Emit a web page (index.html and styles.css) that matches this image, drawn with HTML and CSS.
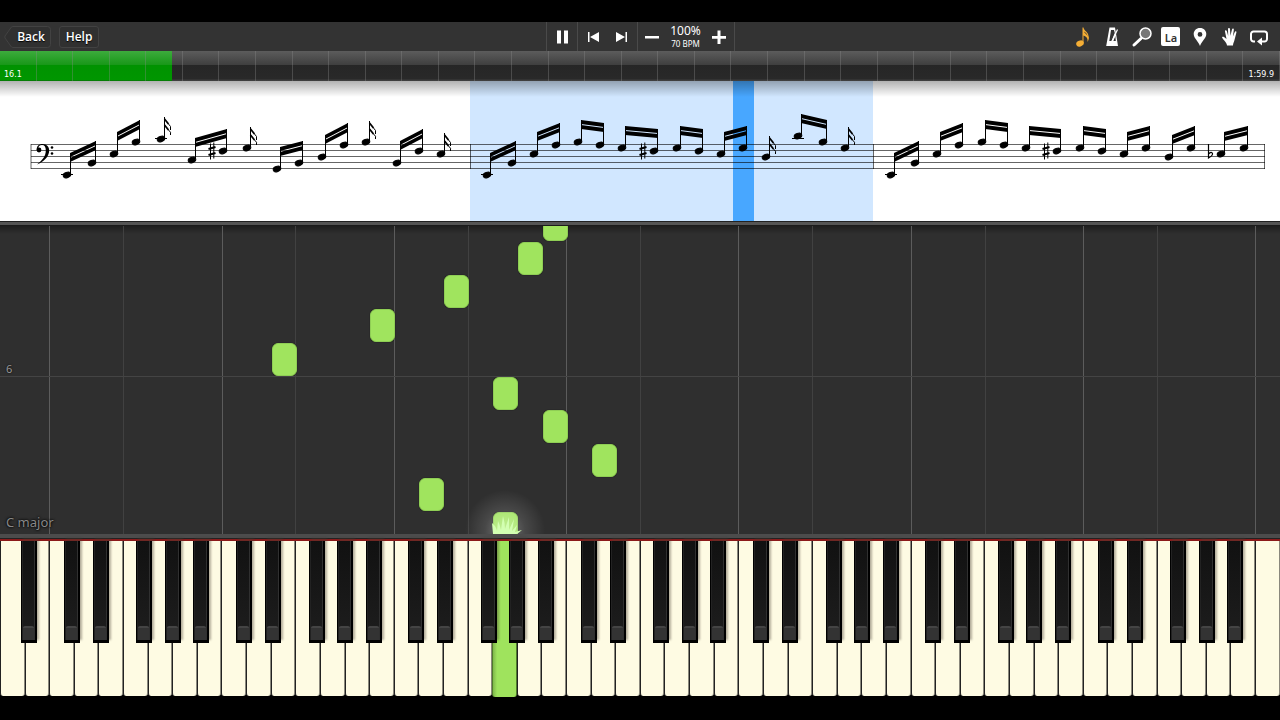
FILE: index.html
```html
<!DOCTYPE html>
<html lang="en">
<head>
  <meta charset="UTF-8">
  <title>Piano Practice</title>
  <meta name="viewport" content="width=device-width, initial-scale=1.0">
  <link rel="stylesheet" href="styles.css">
</head>
<body>
  <header class="toolbar">
    <nav class="toolbar-left">
      <button class="text-button back" type="button">
        <svg class="back-shape" viewBox="0 0 47 22" aria-hidden="true"><path d="M9 .5H43.500Q46.500 .5 46.500 3.500V18.500Q46.500 21.500 43.500 21.500H9Q7 21.500 6 19L1 12Q.5 11 1 10L6 3Q7 .5 9 .5Z"/></svg>
        <span>Back</span>
      </button>
      <button class="text-button help" type="button">Help</button>
    </nav>

    <div class="transport">
      <div class="group">
        <button class="icon-button" type="button" aria-label="Pause">
          <svg width="20" height="20" viewBox="0 0 20 20"><path d="M5 3.500h4v13H5zM12 3.500h4v13h-4z"/></svg>
        </button>
      </div>
      <div class="group">
        <button class="icon-button" type="button" aria-label="Previous">
          <svg width="20" height="20" viewBox="0 0 20 20"><path d="M5 5h1.500v10H5zM16 5v10L7 10z"/></svg>
        </button>
        <button class="icon-button" type="button" aria-label="Next">
          <svg width="20" height="20" viewBox="0 0 20 20"><path d="M13.500 5H15v10h-1.500zM4 5v10l9-5z"/></svg>
        </button>
      </div>
      <div class="group tempo-group">
        <button class="icon-button" type="button" aria-label="Slower">
          <svg width="20" height="20" viewBox="0 0 20 20"><path d="M3 9h14v2.500H3z"/></svg>
        </button>
        <div class="tempo">
          <span class="percent">100%</span>
          <span class="bpm">70 BPM</span>
        </div>
        <button class="icon-button" type="button" aria-label="Faster">
          <svg width="20" height="20" viewBox="0 0 20 20"><path d="M8.500 3.500h3V9H17v2.700h-5.500V17h-3v-5.300H3V9h5.500z"/></svg>
        </button>
      </div>
    </div>

    <div class="tools">
      <button class="icon-button active" type="button" aria-label="Notes">
        <svg width="22" height="22" viewBox="0 0 22 22"><ellipse cx="8" cy="17.500" rx="3.900" ry="2.900" transform="rotate(-22 8 17.500)"/><path d="M10.500 1.500h1c.5 3.500 5 4.500 5 8.500 1 2 0 4-1 6 .5-4-1-5.500-4-6.500V17h-1zM11.800 5.500c1 2 3 2.500 3.700 4.500-.2-2.200-2-3.600-3.700-4.500z" fill-rule="evenodd"/></svg>
      </button>
      <button class="icon-button" type="button" aria-label="Metronome">
        <svg width="22" height="22" viewBox="0 0 22 22"><path fill-rule="evenodd" d="M8.500 1.500h5.500l3 18.500H5.200zM10 4 8.300 15h2.200l3.300-8-.8-3zM14.300 10l-2 5h2.500z"/><path d="M11 15.500 16.500 3.500" fill="none" stroke="#fff" stroke-width="1.200"/></svg>
      </button>
      <button class="icon-button" type="button" aria-label="Zoom">
        <svg width="22" height="22" viewBox="0 0 22 22"><path d="M3 19 10 12.500" stroke="#fff" stroke-width="3" stroke-linecap="round"/><circle cx="14.500" cy="7.500" r="5.500" fill="#777" stroke="#fff" stroke-width="1.500"/></svg>
      </button>
      <button class="icon-button" type="button" aria-label="Note names"><span class="la">La</span></button>
      <button class="icon-button" type="button" aria-label="Marker">
        <svg width="22" height="22" viewBox="0 0 22 22"><path fill-rule="evenodd" d="M11 2c3.800 0 6.300 2.600 6.300 6.100 0 4.200-4.300 6.700-6.300 11.900-2-5.200-6.300-7.700-6.300-11.900C4.700 4.600 7.200 2 11 2zm0 4a2.400 2.400 0 1 0 0 4.800A2.400 2.400 0 0 0 11 6z"/></svg>
      </button>
      <button class="icon-button" type="button" aria-label="Hands">
        <svg width="22" height="22" viewBox="0 0 22 22"><path d="M8 19.500c0-2.500-3.500-5.500-4.700-7.500-.7-1.300.8-1.700 1.700-.9L7.500 13 6 5.500c-.3-1.500 1.400-1.800 1.800-.4L9.200 10 9 3c0-1.500 1.900-1.500 2 0l.4 6.700L13 3.500c.3-1.400 2-1.100 1.800.4l-.9 6.600 1.900-4.500c.5-1.200 1.900-.7 1.600.6L15.500 14c-.5 2.200-1.500 3.500-1.500 5.500z"/></svg>
      </button>
      <button class="icon-button" type="button" aria-label="Loop">
        <svg width="22" height="22" viewBox="0 0 22 22"><path d="M7 15.500H5.500A2.500 2.500 0 0 1 3 13V8a2.500 2.500 0 0 1 2.500-2.500h11A2.500 2.500 0 0 1 19 8v5a2.500 2.500 0 0 1-2.500 2.500H13" fill="none" stroke="#fff" stroke-width="2"/><path d="M14 11.500v8l-5-4z"/></svg>
      </button>
    </div>
  </header>

  <div class="timeline">
    <div class="played"></div>
    <div class="ticks" id="ticks"></div>
    <span class="position">16.1</span>
    <span class="duration">1:59.9</span>
  </div>

  <section class="score" aria-label="Score">
    <svg id="score" viewBox="0 0 1280 140">
      <defs>
        <g id="sharp"><path d="M-1.500-7.500v16M1.800-8.500v16" stroke-width="1"/><path d="M-3.500-2 3.500-4M-3.500 4 3.500 2" stroke-width="2"/></g>
        <g id="flat"><path d="M-1.500-10V4Q3 1.500 2.500-.5Q1.500-3-1.500 0" fill="none" stroke-width="1.200"/></g>
        <g id="flags" fill="none"><path d="M0 2 4 7M0 8 4 13" stroke-width="1.800"/><path d="M4 7Q7 9 6 13M4 13Q7 15 6 18" stroke-width="1"/></g>
      </defs>
      <rect class="measure" x="470" y="0" width="403" height="140"/>
      <rect class="cursor" x="733" y="0" width="21" height="140"/>
      <path class="staff" d="M31 63.500H1265M31 69.500H1265M31 75.500H1265M31 81.500H1265M31 87.500H1265M31 63V88M470.500 63V88M873.500 63V88M1264.500 63V88"/>
      <g class="clef">
        <circle cx="39" cy="69" r="2.400"/>
        <path d="M36.700 69C36.500 65 39 63 42.500 63C47 63 49.200 66 49.200 69.500C49.200 76 43 81 37 83.500C42.500 79 45.800 75 45.800 69.500C45.800 66 44.800 64 42 64C39.500 64 38 65.500 38.500 68Z"/>
        <circle cx="52" cy="66.500" r="1.300"/><circle cx="52" cy="72.500" r="1.300"/>
      </g>
    </svg>
  </section>

  <div class="divider"></div>

  <main class="roll" id="roll">
    <div class="barline"><span class="bar-number">6</span></div>
    <span class="key-name">C major</span>
    <div class="spark">
      <svg viewBox="0 0 40 26" width="40" height="26"><path d="M6 26 5 15Q9 18 10 23L11 13Q13 17 14 22L16 8Q18 15 18 21L22 9Q22 16 22 22L27 11Q26 18 25 23L30 17Q29 21 28 24L35 22Q32 25 29 26Z"/></svg>
    </div>
  </main>

  <div class="rail"></div>
  <div class="piano">
    <div class="white-keys" id="white-keys"></div>
    <div class="black-keys" id="black-keys"></div>
  </div>

  <script src="script.js"></script>
</body>
</html>
```
FILE: styles.css
```css
* {
  box-sizing: border-box;
}
body {
  margin: 0;
  padding: 22px 0 24px;
  min-height: 100vh;
  display: flex;
  flex-direction: column;
  background: #000;
  color: #fff;
  font-family: "Noto Sans", sans-serif;
  overflow-x: hidden;
}
button {
  font: inherit;
  color: inherit;
  background: none;
  border: 0;
  padding: 0;
  cursor: pointer;
}

/* toolbar */
.toolbar {
  display: grid;
  grid-template-columns: 1fr auto 1fr;
  height: 29px;
  background: #333;
}
.toolbar-left {
  display: flex;
  align-items: center;
  gap: 8px;
  padding-left: 4px;
}
.text-button {
  position: relative;
  height: 22px;
  font-family: "Open Sans", sans-serif;
  font-size: 12px;
  font-weight: 600;
  line-height: 20px;
  text-shadow: 0 1px 1px #000;
}
.back {
  width: 47px;
  padding-left: 7px;
}
.back span {
  position: relative;
}
.back-shape {
  position: absolute;
  inset: 0;
  fill: #303030;
  stroke: #424242;
}
.help {
  width: 40px;
  border: 1px solid #424242;
  border-radius: 3px;
  background: #303030;
}
.transport {
  display: flex;
  border-left: 1px solid #4a4a4a;
}
.group {
  display: flex;
  align-items: center;
  border-right: 1px solid #4a4a4a;
}
.icon-button {
  display: flex;
  align-items: center;
  justify-content: center;
  width: 30px;
  height: 29px;
}
.icon-button svg {
  fill: #fff;
}
.group:nth-child(2) .icon-button:last-child {
  width: 29px;
}
.tempo-group {
  width: 97px;
  justify-content: space-between;
}
.tempo {
  display: flex;
  flex-direction: column;
  align-items: center;
  white-space: nowrap;
}
.percent {
  font-size: 12px;
  line-height: 14px;
}
.bpm {
  font-size: 8px;
  line-height: 11px;
}
.tempo-group .icon-button {
  flex: none;
  width: 28px;
}
.tools {
  display: flex;
  justify-self: end;
  justify-content: space-between;
  width: 211px;
  padding-right: 7px;
}
.tools .icon-button {
  width: 28px;
}
.tools .active svg {
  fill: #f5ae35;
}
.la {
  width: 19px;
  height: 19px;
  border-radius: 2px;
  background: #fff;
  color: #333;
  font-size: 11px;
  font-weight: 600;
  line-height: 21px;
}

/* song timeline */
.timeline {
  position: relative;
  height: 30px;
  background: linear-gradient(#5c5c5c, #404040 45%, #262626 47%, #292929 92%, #444);
  font-size: 8px;
  line-height: 8px;
}
.played {
  position: absolute;
  inset: 0 auto 0 0;
  width: 13.4%;
  background: linear-gradient(#3dab3d, #199819 45%, #009200 47%, #009600 95%, #087008);
}
.ticks {
  position: absolute;
  inset: 0;
  display: grid;
  grid-template-columns: repeat(35, 1fr);
}
.ticks i {
  border-right: 1px solid rgba(140, 140, 140, 0.35);
}
.position,
.duration {
  position: absolute;
  bottom: 2px;
  font-family: "DejaVu Sans", sans-serif;
}
.position {
  left: 4px;
}
.duration {
  right: 6px;
}

/* notation */
.score {
  position: relative;
  background: #fff;
}
.score::before {
  content: "";
  position: absolute;
  inset: 0 0 auto;
  height: 16px;
  background: linear-gradient(rgba(0, 0, 0, 0.3), transparent);
}
.score svg {
  display: block;
  width: 100%;
}
.measure {
  fill: #d1e7ff;
}
.cursor {
  fill: #48a7ff;
}
.staff {
  fill: none;
  stroke: #000;
  stroke-opacity: 0.6;
}
.notes {
  stroke: #000;
}

.divider {
  height: 5px;
  background: linear-gradient(#222 1px, #555 1px 4px, #1c1c1c 4px);
}

/* falling notes */
.roll {
  position: relative;
  flex: 1;
  min-height: 308px;
  overflow: hidden;
  background: #2f2f2f;
}
.roll::before {
  content: "";
  position: absolute;
  inset: 0 0 auto;
  height: 8px;
  background: linear-gradient(rgba(0, 0, 0, 0.35), transparent);
}
.string {
  position: absolute;
  top: 0;
  bottom: 0;
  width: 1px;
  background: #414141;
}
.string.octave {
  background: #5c5c5c;
}
.barline {
  position: absolute;
  left: 0;
  right: 0;
  bottom: 157px;
  border-bottom: 1px solid #444;
}
.bar-number {
  display: block;
  padding-left: 6px;
  color: #999;
  font-size: 11px;
  line-height: 14px;
  text-shadow: 0 0 2px #000;
}
.key-name {
  position: absolute;
  left: 6px;
  bottom: 3px;
  color: #888;
  font-size: 13px;
  line-height: 18px;
  text-shadow: 0 0 3px #000, 0 0 2px #000;
}
.note {
  position: absolute;
  width: 25px;
  height: 33px;
  margin-left: 1px;
  border: 1px solid #8fce55;
  border-radius: 6px;
  background: #a0e45e;
  box-shadow: 0 0 1px #000;
}
.spark {
  position: absolute;
  left: 39.45%;
  bottom: -36px;
  width: 80px;
  height: 80px;
  margin-left: -40px;
  background: radial-gradient(closest-side, rgba(255, 255, 255, 0.35), rgba(255, 255, 255, 0.12) 50%, transparent);
}
.spark svg {
  position: absolute;
  left: 22px;
  top: 18px;
  fill: #d3ffb2;
}

/* keyboard */
.rail {
  height: 7px;
  background: linear-gradient(#4c4c4c 4px, #222 4px, #222 5px, #8b1a1a 5px);
}
.piano {
  position: relative;
  height: 155px;
}
.white-keys {
  display: flex;
  height: 100%;
}
.white-key {
  flex: 1;
  border-left: 1px solid #222;
  border-right: 1px solid #8a887c;
  border-radius: 0 0 3px 3px;
  background: #fefbe3;
}
.white-key.pressed {
  height: 156px;
  border-color: #4f7a2c;
  background: linear-gradient(90deg, #7fb84a, #9fe35d 18%);
}
.black-key {
  position: absolute;
  top: 0;
  width: 16px;
  height: 102px;
  margin-left: -8px;
  border: solid #000;
  border-width: 0 2px 3px 1px;
  background: linear-gradient(90deg, #222 1px, transparent 1px 12px, #303030 12px), linear-gradient(#111, #1c1c1c 86px, #333 88px);
  box-shadow: 2px -3px 2px rgba(70, 60, 50, 0.4);
}
.black-key::after {
  content: "";
  position: absolute;
  left: 1px;
  right: 1px;
  bottom: 0;
  height: 12px;
  border-top: 2px solid #444;
  border-radius: 2px 2px 0 0;
  background: #333;
}
```
FILE: script.js
```js
const WHITE_KEYS = 52;
const svgNS = 'http://www.w3.org/2000/svg';

// timeline
const ticks = document.getElementById('ticks');
for (let i = 0; i < 35; i++) {
  ticks.appendChild(document.createElement('i'));
}

// score: [x, step below the top line, stem top], one or two notes to a beam
const groups = [
  [[67, 10, 72], [92, 6, 60]],
  [[114, 3, 51], [136, -1, 39]],
  [[161, -2, 36]],
  [[192, 5, 57], [223, 2, 48]],
  [[247, 1, 46]],
  [[277, 8, 66], [299, 6, 60]],
  [[322, 4, 54], [344, 0, 42]],
  [[366, -1, 40]],
  [[397, 6, 60], [419, 2, 48]],
  [[441, 3, 52]],
  [[487, 10, 72], [512, 6, 60]],
  [[534, 3, 51], [556, 0, 42]],
  [[578, -1, 39], [600, 0, 42]],
  [[622, 1, 45], [654, 2, 48]],
  [[677, 1, 45], [699, 2, 48]],
  [[721, 3, 51], [743, 1, 45]],
  [[766, 4, 55]],
  [[798, -3, 33], [823, -1, 39]],
  [[845, 1, 46]],
  [[891, 10, 72], [915, 6, 60]],
  [[937, 3, 51], [959, 0, 42]],
  [[982, -1, 39], [1004, 0, 42]],
  [[1026, 1, 45], [1057, 2, 48]],
  [[1080, 1, 45], [1102, 2, 48]],
  [[1124, 3, 51], [1146, 1, 45]],
  [[1169, 4, 54], [1191, 1, 45]],
  [[1221, 3, 51], [1244, 1, 45]]
];
const accidentals = [['sharp', 212, 2], ['sharp', 643, 2], ['sharp', 1046, 2], ['flat', 1210, 3]];

const lineY = step => 64 + step * 3;
let music = '';
groups.forEach(group => {
  group.forEach(([x, step, top]) => {
    const y = lineY(step);
    music += `<ellipse cx="${x}" cy="${y}" rx="3.900" ry="2.600" transform="rotate(-20 ${x} ${y})"/>`;
    music += `<path d="M${x + 3.5} ${y - 1}V${top}"/>`;
    if (step === 10 || step <= -2) {
      const ledger = lineY(step === 10 ? 10 : -2) - 0.5;
      music += `<path d="M${x - 6} ${ledger}H${x + 6}"/>`;
    }
  });
  const [x1, , t1] = group[0];
  if (group.length === 1) {
    music += `<use href="#flags" x="${x1 + 3.5}" y="${t1}"/>`;
  } else {
    const [x2, , t2] = group[1];
    [0, 5].forEach(d => {
      music += `<path stroke="none" d="M${x1 + 3} ${t1 + d}L${x2 + 4} ${t2 + d}v4L${x1 + 3} ${t1 + d + 4}z"/>`;
    });
  }
});
accidentals.forEach(([name, x, step]) => {
  music += `<use href="#${name}" x="${x}" y="${lineY(step)}"/>`;
});
const notes = document.createElementNS(svgNS, 'g');
notes.setAttribute('class', 'notes');
notes.innerHTML = music;
document.getElementById('score').appendChild(notes);

// piano roll
const roll = document.getElementById('roll');
const addToRoll = (className, key, bottom) => {
  const el = document.createElement('div');
  el.className = className;
  el.style.left = `${key / WHITE_KEYS * 100}%`;
  if (bottom !== undefined) el.style.bottom = `${bottom}px`;
  roll.insertBefore(el, roll.firstChild);
};
[[22, 293], [21, 259], [18, 226], [15, 192], [11, 158], [20, 124], [22, 91], [24, 57], [17, 23], [20, -11]]
  .forEach(([key, bottom]) => addToRoll('note', key, bottom));
for (let key = 2; key < WHITE_KEYS; key += 7) {
  addToRoll('string octave', key);
  if (key + 3 < WHITE_KEYS) addToRoll('string', key + 3);
}

// keyboard, from A0 to C8
const whiteKeys = document.getElementById('white-keys');
const blackKeys = document.getElementById('black-keys');
for (let i = 0; i < WHITE_KEYS; i++) {
  const key = document.createElement('button');
  key.type = 'button';
  key.className = i === 20 ? 'white-key pressed' : 'white-key';
  key.setAttribute('aria-label', 'ABCDEFG'[i % 7]);
  whiteKeys.appendChild(key);
}
// centre of each black key, in white key widths from C
const blackOffsets = { 'C#': 0.92, 'D#': 2.09, 'F#': 3.87, 'G#': 5.02, 'A#': 6.18 };
for (let octave = -1; octave < 7; octave++) {
  Object.entries(blackOffsets).forEach(([name, offset]) => {
    const centre = 2 + octave * 7 + offset;
    // the lowest octave only has its A#
    if (centre < 1) return;
    const key = document.createElement('button');
    key.type = 'button';
    key.className = 'black-key';
    key.setAttribute('aria-label', name);
    key.style.left = `${centre / WHITE_KEYS * 100}%`;
    blackKeys.appendChild(key);
  });
}
```
